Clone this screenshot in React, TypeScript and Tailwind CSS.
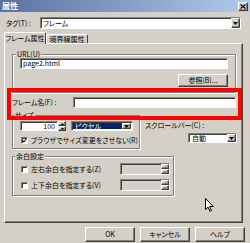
const sunken =
  "border border-t-[#808080] border-l-[#808080] border-b-white border-r-white shadow-[inset_1px_1px_0_#404040]";
const raised =
  "border border-t-white border-l-white border-b-[#404040] border-r-[#404040] shadow-[inset_-1px_-1px_0_#808080]";
const etched = "border border-[#808080] shadow-[inset_1px_1px_0_#fff,1px_1px_0_#fff]";

function DropButton() {
  return (
    <span className={`flex h-full w-[9px] shrink-0 items-center justify-center bg-[#d4d0c8] ${raised}`}>
      <svg width="5" height="3" viewBox="0 0 5 3">
        <path d="M0 0h5L2.5 3z" fill="#000" />
      </svg>
    </span>
  );
}

function Spinner({ disabled }: { disabled?: boolean }) {
  const fill = disabled ? "#808080" : "#000";
  return (
    <span className="flex h-full w-[8px] shrink-0 flex-col">
      <span className={`flex flex-1 items-center justify-center bg-[#d4d0c8] ${raised}`}>
        <svg width="3" height="2" viewBox="0 0 3 2">
          <path d="M1.5 0L3 2H0z" fill={fill} />
        </svg>
      </span>
      <span className={`flex flex-1 items-center justify-center bg-[#d4d0c8] ${raised}`}>
        <svg width="3" height="2" viewBox="0 0 3 2">
          <path d="M0 0h3L1.5 2z" fill={fill} />
        </svg>
      </span>
    </span>
  );
}

function Check({ checked }: { checked?: boolean }) {
  return (
    <span className={`flex h-[7px] w-[7px] shrink-0 items-center justify-center bg-white ${sunken}`}>
      {checked && (
        <svg width="5" height="5" viewBox="0 0 5 5">
          <path d="M0.6 2.4l1.3 1.4L4.4 1" stroke="#000" strokeWidth="1.1" fill="none" />
        </svg>
      )}
    </span>
  );
}

function Button({ label }: { label: string }) {
  return (
    <span className={`flex h-[15px] w-[50px] items-center justify-center bg-[#d4d0c8] ${raised}`}>
      {label}
    </span>
  );
}

export default function App() {
  return (
    <div className="relative h-[243px] w-[250px] overflow-hidden bg-[#d4d0c8] font-['Noto_Sans_CJK_JP',sans-serif] text-[7px] leading-none text-black [font-feature-settings:'palt']">
      {/* title bar */}
      <div className="flex h-[12px] items-center justify-between bg-gradient-to-r from-[#5a72a2] to-[#b2cbec] pl-[2px] pr-[2px]">
        <span className="text-[8px] font-bold text-white">属性</span>
        <span className={`flex h-[9px] w-[10px] items-center justify-center bg-[#d4d0c8] ${raised}`}>
          <svg width="6" height="5" viewBox="0 0 6 5">
            <path d="M0.5 0.5l5 4M5.5 0.5l-5 4" stroke="#000" strokeWidth="1.2" />
          </svg>
        </span>
      </div>

      {/* tag row */}
      <div className="mt-[5px] flex h-[12px] items-center pl-[6px]">
        <span className="w-[34px]">タグ(T) :</span>
        <div className={`flex h-full w-[201px] items-center bg-white pl-[2px] ${sunken}`}>
          <span className="flex-1">フレーム</span>
          <DropButton />
        </div>
      </div>

      {/* tabs */}
      <div className="mt-[3px] flex h-[11px] items-end pl-[4px]">
        <span className="relative z-10 -mb-px flex h-[12px] w-[42px] items-center justify-center rounded-t-[2px] border border-b-0 border-t-white border-l-white border-r-[#404040] bg-[#d4d0c8]">
          フレーム属性
        </span>
        <span className="flex h-[9px] w-[42px] items-center justify-center rounded-t-[2px] border border-b-0 border-t-white border-l-white border-r-[#404040] bg-[#d4d0c8]">
          境界線属性
        </span>
      </div>

      {/* panel */}
      <div className={`ml-[4px] flex h-[180px] w-[239px] flex-col ${raised}`}>
        <fieldset className={`ml-[7px] mt-[6px] w-[224px] ${etched}`}>
          <legend className="ml-[3px] h-[8px] bg-[#d4d0c8] px-[1px] leading-[8px]">URL(U)</legend>
          <div className="flex flex-col px-[7px] pb-[5px]">
            <div className={`flex h-[11px] items-center bg-white pl-[2px] ${sunken}`}>page2.html</div>
            <span className={`mt-[5px] flex h-[13px] w-[50px] items-center justify-center self-end bg-[#d4d0c8] ${raised}`}>
              参照(B)...
            </span>
          </div>
        </fieldset>

        <div className="ml-[7px] mt-[4px] flex h-[11px] items-center">
          <span className="w-[61px]">フレーム名(F) :</span>
          <div className={`h-full w-[163px] bg-white ${sunken}`} />
        </div>

        <div className="mt-[3px] flex">
          <fieldset className={`ml-[7px] w-[128px] ${etched}`}>
            <legend className="ml-[1px] h-[8px] bg-[#d4d0c8] px-[1px] leading-[8px]">サイズ</legend>
            <div className="flex flex-col pb-[4px] pl-[7px]">
              <div className="mt-[2px] flex h-[10px] items-center">
                <div className={`flex h-full w-[38px] items-center justify-end bg-white pr-[2px] ${sunken}`}>100</div>
                <Spinner />
                <div className={`ml-[5px] flex h-full w-[62px] items-center bg-white p-[1px] ${sunken}`}>
                  <span className="flex h-full flex-1 items-center bg-[#0a246a] pl-[2px] text-white">ピクセル</span>
                  <DropButton />
                </div>
              </div>
              <div className="mt-[5px] flex h-[8px] items-center pl-[1px]">
                <Check checked />
                <span className="ml-[3px]">ブラウザでサイズ変更をさせない(R)</span>
              </div>
            </div>
          </fieldset>
          <div className="ml-[5px] flex w-[92px] flex-col">
            <span className="mt-[11px] h-[8px]">スクロールバー(C) :</span>
            <div className={`ml-auto mt-[3px] flex h-[10px] w-[49px] items-center bg-white pl-[3px] ${sunken}`}>
              <span className="flex-1">自動</span>
              <DropButton />
            </div>
          </div>
        </div>

        <fieldset className={`ml-[7px] mt-[3px] w-[162px] ${etched}`}>
          <legend className="ml-[2px] h-[8px] bg-[#d4d0c8] px-[1px] leading-[8px]">余白設定</legend>
          <div className="flex flex-col gap-[4px] pb-[4px] pl-[8px] pr-[3px] pt-[3px]">
            {["左右余白を指定する(Z)", "上下余白を指定する(V)"].map((label) => (
              <div className="flex h-[12px] items-center" key={label}>
                <Check />
                <span className="ml-[3px] flex-1">{label}</span>
                <div className={`flex h-full w-[50px] justify-end bg-[#d4d0c8] ${sunken}`}>
                  <Spinner disabled />
                </div>
              </div>
            ))}
          </div>
        </fieldset>
      </div>

      {/* buttons */}
      <div className="mt-[4px] flex justify-end gap-[5px] pr-[5px]">
        <Button label="OK" />
        <Button label="キャンセル" />
        <Button label="ヘルプ" />
      </div>

      {/* highlight annotation */}
      <div className="absolute left-[7px] top-[88px] h-[32px] w-[235px] border-4 border-[#ff0000]" />

      {/* mouse pointer */}
      <svg className="absolute left-[205px] top-[198px]" width="9" height="14" viewBox="0 0 9 14">
        <path d="M0.5 0.5v11l2.6-2.4 1.8 4.2 1.6-0.7-1.8-4.1h3.6z" fill="#fff" stroke="#000" strokeWidth="1" />
      </svg>
    </div>
  );
}
